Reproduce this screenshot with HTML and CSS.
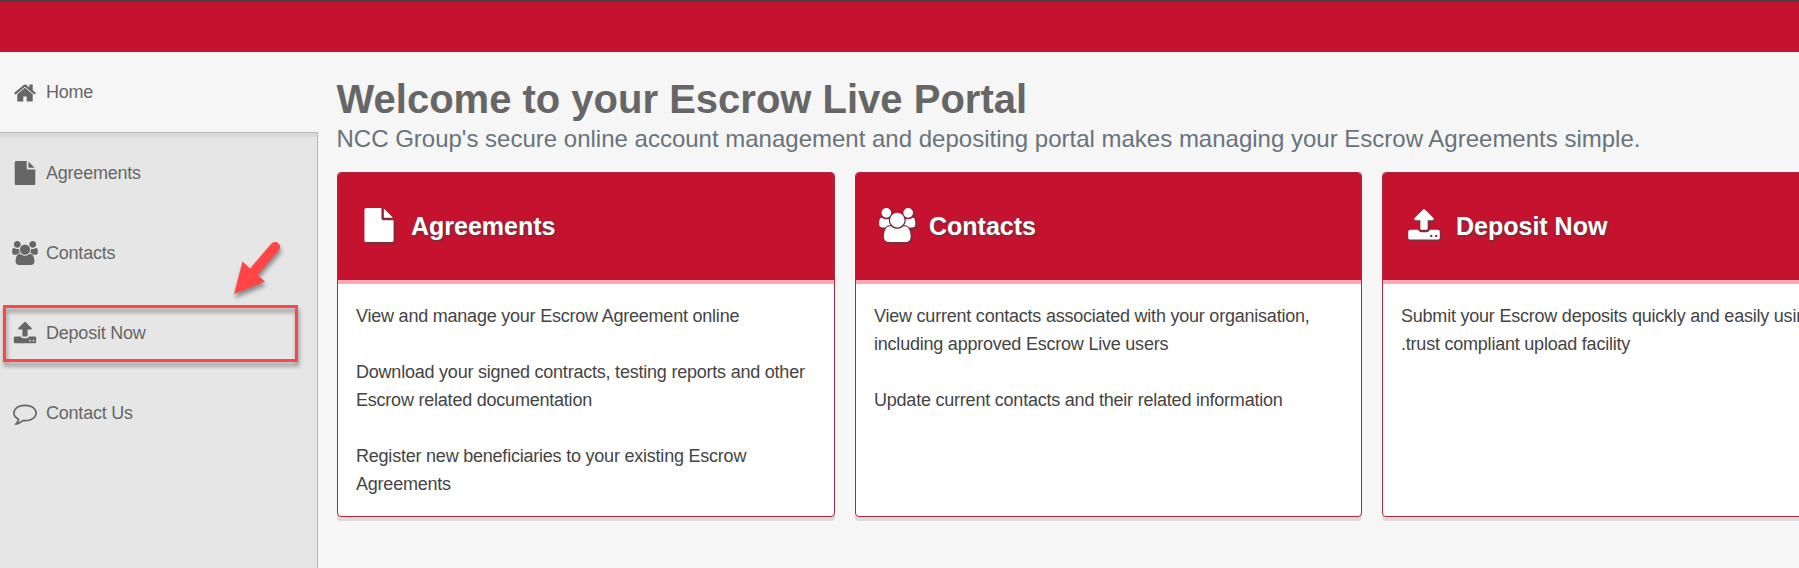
FILE: index.html
```html
<!DOCTYPE html>
<html lang="en">
<head>
<meta charset="utf-8">
<title>Escrow Live Portal</title>
<link rel="stylesheet" href="styles.css">
</head>
<body>
<svg class="sprite" aria-hidden="true">
  <symbol id="home" viewBox="0 0 1792 1792"><path d="M1472 992v480q0 26-19 45t-45 19h-384v-384h-256v384h-384q-26 0-45-19t-19-45v-480q0-1 .5-3t.5-3l575-474 575 474q1 2 1 6zm223-69l-62 74q-8 9-21 11h-3q-13 0-21-7l-692-577-692 577q-12 8-24 7-13-2-21-11l-62-74q-8-10-7-23.5t11-21.5l719-599q32-26 76-26t76 26l244 204v-195q0-14 9-23t23-9h192q14 0 23 9t9 23v408l219 182q10 8 11 21.5t-7 23.5z"/></symbol>
  <symbol id="file" viewBox="0 0 1792 1792"><path d="M1152 512v-472q22 14 36 28l408 408q14 14 28 36h-472zm-128 32q0 40 28 68t68 28h544v1056q0 40-28 68t-68 28h-1344q-40 0-68-28t-28-68v-1600q0-40 28-68t68-28h800v544z"/></symbol>
  <symbol id="users" viewBox="-64 0 1920 1792"><path transform="translate(-64 0)" d="M593 896q-162 5-265 128h-134q-82 0-138-40.500t-56-118.500q0-353 124-353 6 0 43.500 21t97.500 42.500 119 21.500q67 0 133-23-5 37-5 66 0 139 81 256zm1071 637q0 120-73 189.500t-194 69.500h-874q-121 0-194-69.500t-73-189.500q0-53 3.500-103.500t14-109 26.500-108.500 43-97.500 62-81 85.500-53.500 111.500-20q10 0 43 21.500t73 48 107 48 135 21.500 135-21.500 107-48 73-48 43-21.500q61 0 111.500 20t85.500 53.500 62 81 43 97.500 26.500 108.500 14 109 3.500 103.500zm-1024-1277q0 106-75 181t-181 75-181-75-75-181 75-181 181-75 181 75 75 181zm704 384q0 159-112.500 271.500t-271.500 112.500-271.500-112.500-112.500-271.500 112.500-271.500 271.500-112.500 271.500 112.500 112.500 271.500zm576 225q0 78-56 118.500t-138 40.500h-134q-103-123-265-128 81-117 81-256 0-29-5-66 66 23 133 23 59 0 119-21.500t97.500-42.500 43.500-21q124 0 124 353zm-128-609q0 106-75 181t-181 75-181-75-75-181 75-181 181-75 181 75 75 181z"/></symbol>
  <symbol id="upload" viewBox="0 0 1792 1792"><path d="M1344 1472q0-26-19-45t-45-19-45 19-19 45 19 45 45 19 45-19 19-45zm256 0q0-26-19-45t-45-19-45 19-19 45 19 45 45 19 45-19 19-45zm128-224v320q0 40-28 68t-68 28h-1472q-40 0-68-28t-28-68v-320q0-40 28-68t68-28h427q21 56 70.500 92t110.500 36h256q61 0 110.500-36t70.500-92h427q40 0 68 28t28 68zm-325-648q-17 40-59 40h-256v448q0 26-19 45t-45 19h-256q-26 0-45-19t-19-45v-448h-256q-42 0-59-40-17-39 14-69l448-448q18-19 45-19t45 19l448 448q31 30 14 69z"/></symbol>
  <symbol id="comment" viewBox="0 0 1792 1792"><path d="M896 384q-204 0-381.500 69.500t-282 187.500-104.500 255q0 112 71.500 213.500t201.500 175.500l87 50-27 96q-24 91-70 172 152-63 275-171l43-38 57 6q69 8 130 8 204 0 381.500-69.500t282-187.500 104.500-255-104.500-255-282-187.500-381.500-69.500zm896 512q0 174-120 321.500t-326 233-450 85.500q-70 0-145-8-198 175-460 242-49 14-114 22h-5q-15 0-27-10.500t-16-27.500v-1q-3-4-.5-12t2-10 4.500-9.500l6-9 7-8.500 8-9q7-8 31-34.500t34.500-38 31-39.500 32.500-51 27-59 26-76q-157-89-247.500-220t-90.500-281q0-174 120-321.500t326-233 450-85.500 450 85.500 326 233 120 321.500z"/></symbol>
</svg>
<header class="topbar"></header>
<div class="layout">
  <nav class="sidebar">
    <a class="nav-item active"><svg class="icon"><use href="#home"/></svg><span>Home</span></a>
    <div class="nav-rest">
      <a class="nav-item"><svg class="icon"><use href="#file"/></svg><span>Agreements</span></a>
      <a class="nav-item"><svg class="icon wide"><use href="#users"/></svg><span>Contacts</span></a>
      <a class="nav-item"><svg class="icon"><use href="#upload"/></svg><span>Deposit Now</span></a>
      <a class="nav-item"><svg class="icon"><use href="#comment"/></svg><span>Contact Us</span></a>
    </div>
  </nav>
  <main class="content">
    <h1>Welcome to your Escrow Live Portal</h1>
    <p class="lead">NCC Group's secure online account management and depositing portal makes managing your Escrow Agreements simple.</p>
    <div class="cards">
      <section class="card">
        <h2><svg class="icon"><use href="#file"/></svg><span>Agreements</span></h2>
        <div class="card-body">
          <p>View and manage your Escrow Agreement online</p>
          <p>Download your signed contracts, testing reports and other<br>Escrow related documentation</p>
          <p>Register new beneficiaries to your existing Escrow<br>Agreements</p>
        </div>
      </section>
      <section class="card">
        <h2><svg class="icon wide"><use href="#users"/></svg><span>Contacts</span></h2>
        <div class="card-body">
          <p>View current contacts associated with your organisation,<br>including approved Escrow Live users</p>
          <p>Update current contacts and their related information</p>
        </div>
      </section>
      <section class="card">
        <h2><svg class="icon"><use href="#upload"/></svg><span>Deposit Now</span></h2>
        <div class="card-body">
          <p>Submit your Escrow deposits quickly and easily using<br>.trust compliant upload facility</p>
        </div>
      </section>
    </div>
  </main>
</div>
<div class="highlight"></div>
<svg class="arrow" viewBox="225 235 65 70"><path d="M234 294L242.500 261.500L250 268.500L271.200 243.700A5 5 0 0 1 278.800 250.300L257.500 275L265 281.500Z"/></svg>
</body>
</html>
```
FILE: styles.css
```css
* { box-sizing: border-box; }
body {
  margin: 0;
  height: 568px;
  overflow: hidden;
  display: flex;
  flex-direction: column;
  background: #f6f6f6;
  font-family: "Liberation Sans", Arial, sans-serif;
  font-size: 18px;
  letter-spacing: -0.22px;
  color: #444;
}
.sprite { position: absolute; width: 0; height: 0; }
.icon { flex: none; width: 24px; height: 24px; fill: currentColor; overflow: visible; }
.icon.wide { width: 26px; margin: 0 -1px; }

.topbar { flex: none; height: 52px; background: #c4122f; border-top: 2px solid #444; }
.layout { flex: 1; display: flex; min-height: 0; }

.sidebar { flex: none; width: 318px; display: flex; flex-direction: column; color: #666; }
.nav-item { height: 80px; padding: 1px 0 0 13px; display: flex; align-items: center; gap: 9px; }
.nav-rest {
  flex: 1;
  background: #e6e6e6;
  border-top: 1px solid #b8b8b8;
  border-right: 1px solid #b8b8b8;
  box-shadow: inset 0 4px 0 #d9d9d9;
}
.nav-rest .nav-item { padding-top: 0; }

.content { flex: none; width: 1481px; padding: 24px 0 0 19px; }
h1 { margin: 0 0 0 -0.500px; font-size: 40px; line-height: 46px; letter-spacing: 0; color: #666; white-space: nowrap; }
.lead { margin: 3px 0 0 -0.500px; font-size: 24px; line-height: 28px; letter-spacing: 0; color: #69737a; white-space: nowrap; }
.cards { margin-top: 19px; display: grid; grid-template-columns: 498px 507px 507px; gap: 20px; height: 345px; }
.card {
  background: #fff;
  border: 1px solid #b02642;
  border-radius: 4px;
  box-shadow: 0 4px 0 #dfdada;
  overflow: hidden;
}
h2 {
  margin: 0;
  height: 111px;
  padding: 0 0 3px 24px;
  display: flex;
  align-items: center;
  gap: 15px;
  background: #c4122f;
  border-bottom: 4px solid #f9a8b6;
  color: #fff;
  font-size: 25px;
  letter-spacing: 0;
  text-shadow: 1px 1px 2px #444;
}
h2 span { padding-top: 2px; }
h2 .icon { width: 34px; height: 34px; filter: drop-shadow(1px 1px 1px #444); }
h2 .icon.wide { width: 36.500px; margin: 0 -1.250px; }
.card-body { padding: 18px; line-height: 28px; white-space: nowrap; }
.card-body p { margin: 0 0 28px; }

/* Callout drawn over the sidebar */
.highlight {
  position: absolute;
  left: 3px;
  top: 305px;
  width: 295px;
  height: 57px;
  border: 3px solid #ff4545;
  filter: drop-shadow(1px 4px 2px rgba(0, 0, 0, .4));
}
.arrow {
  position: absolute;
  left: 225px;
  top: 235px;
  width: 65px;
  height: 70px;
  fill: #ff4545;
  filter: drop-shadow(1px 4px 2px rgba(0, 0, 0, .4));
}
```
